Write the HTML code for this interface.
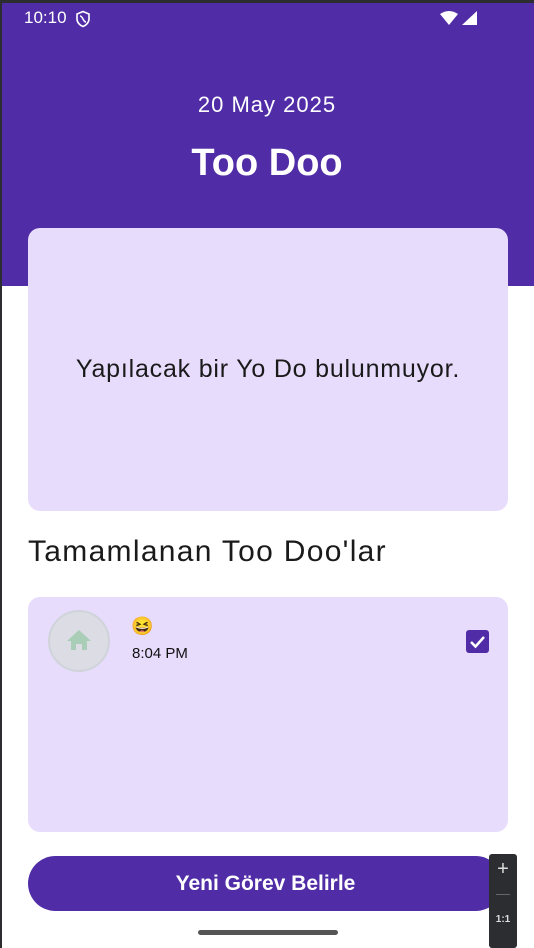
<!DOCTYPE html>
<html><head><meta charset="utf-8"><style>
*{margin:0;padding:0;box-sizing:border-box}
body{width:534px;height:948px;overflow:hidden;background:#fff;font-family:"Liberation Sans",sans-serif;position:relative}
.frame{position:absolute;left:0;top:0;width:2px;height:948px;background:#2b2d30}
.frametop{position:absolute;left:0;top:0;width:534px;height:3px;background:#2b2d30}
.hdr{position:absolute;left:2px;top:3px;width:532px;height:283px;background:#502da6}
.t{position:absolute;color:#fff}
.card{position:absolute;left:28px;width:480px;background:#e8dcfd;border-radius:12px}
</style></head><body>
<div class="hdr"></div>
<div class="frame"></div><div class="frametop"></div>
<div class="t" style="left:24px;top:8px;font-size:17px">10:10</div>
<svg style="position:absolute;left:74px;top:10px" width="18" height="18" viewBox="0 0 18 18"><path d="M9 1.5 L15 4 V9 C15 12.5 12 15.5 9 16.5 C6 15.5 3 12.5 3 9 V4 Z" fill="none" stroke="#fff" stroke-width="1.6"/><path d="M6 6 C9 6 9 12 12 12" fill="none" stroke="#fff" stroke-width="1.5"/></svg>
<svg style="position:absolute;left:440px;top:10px" width="40" height="16" viewBox="0 0 40 16"><path d="M0 4 Q9 -2 18 4 L9 15 Z" fill="#fff"/><path d="M37 1 V15 H22 Z" fill="#fff"/></svg>
<div class="t" style="left:0;width:534px;text-align:center;top:92px;font-size:22px;letter-spacing:1px">20 May 2025</div>
<div class="t" style="left:0;width:534px;text-align:center;top:142px;font-size:38px;font-weight:bold">Too Doo</div>
<div class="card" style="top:228px;height:283px"></div>
<div style="position:absolute;left:28px;width:480px;top:355px;text-align:center;font-size:25px;letter-spacing:0.8px;color:#1a1a1a">Yapılacak bir Yo Do bulunmuyor.</div>
<div style="position:absolute;left:28px;top:535px;font-size:30px;letter-spacing:1.3px;color:#1a1a1a">Tamamlanan Too Doo'lar</div>
<div class="card" style="top:597px;height:235px"></div>
<div style="position:absolute;left:48px;top:610px;width:62px;height:62px;border-radius:50%;background:#dcdce4;border:2px solid #cfd3da"></div>
<svg style="position:absolute;left:66px;top:628px" width="26" height="24" viewBox="0 0 26 24"><path d="M13 2 L25 13 H21 V22 H16 V16 H10 V22 H5 V13 H1 Z" fill="#a9cdb6"/></svg>
<div style="position:absolute;left:131px;top:616px;font-size:18px">😆</div>
<div style="position:absolute;left:132px;top:645px;font-size:15px;color:#111">8:04 PM</div>
<div style="position:absolute;left:466px;top:630px;width:23px;height:23px;background:#502da6;border-radius:3px"></div>
<svg style="position:absolute;left:466px;top:630px" width="23" height="23" viewBox="0 0 23 23"><path d="M5 12 L9.5 16.5 L18 7" fill="none" stroke="#fff" stroke-width="2.5"/></svg>
<div style="position:absolute;left:28px;top:856px;width:475px;height:55px;background:#502da6;border-radius:28px;color:#fff;text-align:center;line-height:55px;font-size:21px;font-weight:bold">Yeni Görev Belirle</div>
<div style="position:absolute;left:489px;top:854px;width:28px;height:94px;background:#2b2d30;border-radius:3px"></div>
<div style="position:absolute;left:489px;top:858px;width:28px;text-align:center;color:#ddd;font-size:20px">+</div>
<div style="position:absolute;left:496px;top:894px;width:14px;height:1px;background:#666"></div>
<div style="position:absolute;left:489px;top:914px;width:28px;text-align:center;color:#ddd;font-size:10px;font-weight:bold">1:1</div>
<div style="position:absolute;left:198px;top:930px;width:140px;height:5px;border-radius:3px;background:#555"></div>
</body></html>
